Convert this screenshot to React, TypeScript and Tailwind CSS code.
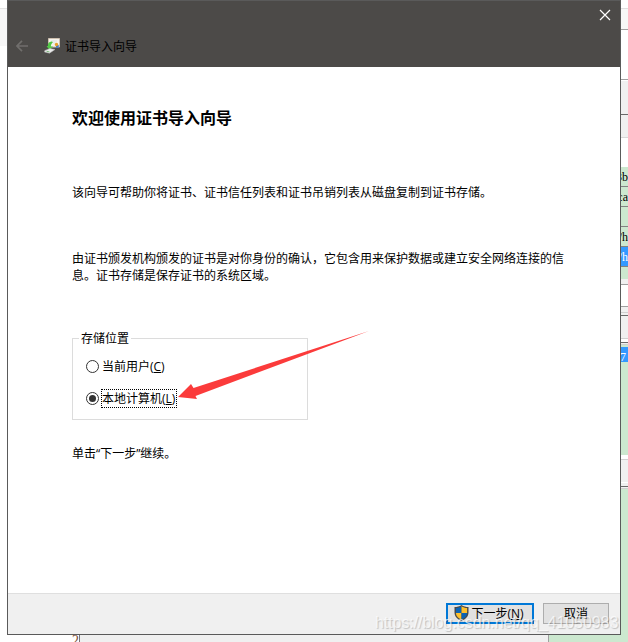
import React from 'react';

type Band = { h: string; label?: string };

const leftBands: Band[] = [
  { h: 'h-2 bg-white' },
  { h: 'h-px bg-[#e4e4e4]' },
  { h: 'h-[37px] bg-[#f7f7f7]' },
  { h: 'h-[589px] bg-white' },
];

const rightBands: Band[] = [
  { h: 'h-2 bg-white' },
  { h: 'h-px bg-[#e0e0e0]' },
  { h: 'h-5 bg-[#f7f7f7]' },
  { h: 'h-px bg-[#a0a0a0]' },
  { h: 'h-[49px] bg-white' },
  { h: 'h-px bg-[#a0a0a0]' },
  { h: 'h-px bg-white' },
  { h: 'h-[33px] bg-[#f0f0f0]' },
  { h: 'h-px bg-[#696969]' },
  { h: 'h-[22px] bg-[#f0f0f0]' },
  { h: 'h-px bg-[#d8d8d8]' },
  { h: 'h-[29px] bg-white' },
  { h: 'h-[19px] bg-[#cce8cf]', label: '3b' },
  { h: 'h-px bg-[#828282]' },
  { h: 'h-[19px] bg-[#cce8cf]', label: 'ca' },
  { h: 'h-px bg-[#828282]' },
  { h: 'h-[19px] bg-[#cce8cf]' },
  { h: 'h-px bg-[#828282]' },
  { h: 'h-[19px] bg-[#cce8cf]', label: '/h' },
  { h: 'h-px bg-[#828282]' },
  { h: 'h-[19px] bg-[#3399ff] text-white', label: '/h' },
  { h: 'h-px bg-[#828282]' },
  { h: 'h-3 bg-[#cce8cf]' },
  { h: 'h-[5px] bg-[#f0f0f0]' },
  { h: 'h-px bg-[#a0a0a0]' },
  { h: 'h-[21px] bg-white' },
  { h: 'h-px bg-[#a0a0a0]' },
  { h: 'h-[5px] bg-[#f0f0f0]' },
  { h: 'h-px bg-[#d0d0d0]' },
  { h: 'h-0.5 bg-[#f0f0f0]' },
  { h: 'h-px bg-[#696969]' },
  { h: 'h-[22px] bg-[#f0f0f0]' },
  { h: 'h-px bg-[#d0d0d0]' },
  { h: 'h-[3px] bg-white' },
  { h: 'h-px bg-[#696969]' },
  { h: 'h-px bg-[#f0f0f0]' },
  { h: 'h-px bg-[#d0d0d0]' },
  { h: 'h-0.5 bg-[#cce8cf]' },
  { h: 'h-[15px] bg-[#3399ff] pt-1 pr-0.5 text-white', label: '7' },
  { h: 'h-[93px] bg-[#cce8cf]' },
  { h: 'h-1 bg-white' },
  { h: 'h-px bg-[#d0d0d0]' },
  { h: 'h-[22px] bg-[#f0f0f0]' },
  { h: 'h-px bg-white' },
  { h: 'h-[3px] bg-[#f0f0f0]' },
  { h: 'h-px bg-[#696969]' },
  { h: 'h-px bg-[#f0f0f0]' },
  { h: 'h-px bg-[#d0d0d0]' },
  { h: 'h-[146px] bg-[#cce8cf]' },
];

function Strip({ bands }: { bands: Band[] }) {
  return (
    <div className="flex w-[7px] shrink-0 flex-col overflow-hidden">
      {bands.map((b, i) => (
        <div
          key={i}
          className={`${b.h} flex shrink-0 items-center justify-end overflow-hidden font-['Liberation_Serif',serif] text-[12px] leading-none`}
        >
          {b.label}
        </div>
      ))}
    </div>
  );
}

function CertificateIcon() {
  return (
    <svg width="17" height="16" viewBox="0 0 17 16">
      <path d="M4.500.5h11v8.500h-11z" fill="#f6f3ec" stroke="#cdbfae" />
      <path d="M7 3h6M9 5h3" stroke="#dde1e6" />
      <path d="M12 7v3l1.500-.5 1.200.8V7" fill="#3f78c8" />
      <circle cx="12.500" cy="6.500" r="1.700" fill="#e5a02c" />
      <path d="M7.500 3.500C4.800 4 3.500 5.500 4 8H2.500l3 4L9 8.500H6.800C6.800 7 7.500 5.500 9 4z" fill="#52c846" />
      <path d="M.8 12.500 6 10.500 11 11.500 5.500 15.200.5 14z" fill="#eaeaea" stroke="#b4b4b4" strokeWidth=".5" />
      <path d="m2.500 13.200 3 .8" stroke="#7ab67a" />
    </svg>
  );
}

function ShieldIcon() {
  return (
    <svg width="15" height="16" viewBox="0 0 15 16">
      <path d="M7.500 0C5.500 1.500 3 2 .5 2v5.200C.5 11.400 3.300 14.300 7.500 16c4.200-1.700 7-4.600 7-8.800V2C12 2 9.500 1.500 7.500 0z" fill="#494949" />
      <path d="M7.500 1.300C5.800 2.500 4 3 1.900 3.100V8h5.600z" fill="#0d63b3" />
      <path d="M7.500 1.300C9.200 2.500 11 3 13.100 3.100V8H7.500z" fill="#ffc02b" />
      <path d="M1.900 8h5.600v6.800C4.300 13.400 2.100 11.200 1.900 8z" fill="#ffc02b" />
      <path d="M13.100 8H7.500v6.800c3.200-1.400 5.400-3.600 5.600-6.800z" fill="#0d63b3" />
    </svg>
  );
}

function Radio({ checked = false }: { checked?: boolean }) {
  return (
    <span className="flex size-[13px] shrink-0 items-center justify-center rounded-full border border-[#333] bg-white">
      {checked && <span className="size-[7px] rounded-full bg-[#333]" />}
    </span>
  );
}

export default function App() {
  return (
    <div className="relative h-[642px] w-[628px] overflow-hidden bg-white font-['Open_Sans','Noto_Sans_CJK_SC',sans-serif] text-[12px] leading-[17px] text-black">
      <div className="flex h-[635px]">
        <Strip bands={leftBands} />
        <main className="flex w-[614px] shrink-0 flex-col border border-[#5a5a5a] bg-white">
          <header className="flex h-[66px] flex-col bg-[#4c4a48]">
            <div className="flex h-7 justify-end pt-2 pr-[9px]">
              <svg width="12" height="12" viewBox="0 0 12 12" stroke="#fff" strokeWidth="1.2">
                <path d="m1 1 10 10M11 1 1 11" />
              </svg>
            </div>
            <div className="flex h-[34px] items-center pl-2">
              <svg width="12" height="12" viewBox="0 0 12 12" fill="none" stroke="#706e6c" strokeWidth="1.7">
                <path d="M12 6H1M6 .8.900 6 6 11.200" />
              </svg>
              <span className="ml-4">
                <CertificateIcon />
              </span>
              <span className="ml-1">证书导入向导</span>
            </div>
          </header>

          <section className="flex h-[526px] flex-col pl-16">
            <h1 className="mt-[39px] text-[16px] leading-6 font-bold">欢迎使用证书导入向导</h1>
            <p className="mt-[54px]">该向导可帮助你将证书、证书信任列表和证书吊销列表从磁盘复制到证书存储。</p>
            <p className="mt-[49px] whitespace-nowrap">
              由证书颁发机构颁发的证书是对你身份的确认，它包含用来保护数据或建立安全网络连接的信
              <br />
              息。证书存储是保存证书的系统区域。
            </p>
            <fieldset className="mt-[46px] flex h-[90px] w-[236px] flex-col border border-[#dcdcdc] pl-[13px]">
              <legend className="-ml-[7px] px-0.5">存储位置</legend>
              <label className="mt-[10px] flex h-[18px] items-center gap-[3px]">
                <Radio />
                <span>
                  当前用户(<u>C</u>)
                </span>
              </label>
              <label className="mt-[14px] flex h-[18px] items-center gap-0.5">
                <Radio checked />
                <span className="flex h-[19px] w-[76px] items-center border border-dotted border-black whitespace-nowrap">
                  本地计算机(<u>L</u>)
                </span>
              </label>
            </fieldset>
            <p className="mt-[25px]">单击“下一步”继续。</p>
          </section>

          <footer className="flex h-[41px] justify-end gap-[9px] border-t border-[#dfdfdf] bg-[#f0f0f0] pt-[9px] pr-[11px]">
            <button className="flex h-[21px] w-[88px] items-center justify-center border-2 border-[#0078d7] bg-[#e1e1e1]">
              <span className="-mt-px -ml-0.5 h-4">
                <ShieldIcon />
              </span>
              <span className="ml-0.5">
                下一步(<u>N</u>)
              </span>
            </button>
            <button className="flex h-[21px] w-[66px] items-center justify-center border border-[#adadad] bg-[#e1e1e1]">
              取消
            </button>
          </footer>
        </main>
        <Strip bands={rightBands} />
      </div>

      <div className="flex h-[7px] overflow-hidden">
        <div className="flex w-20 justify-end overflow-hidden border-r border-[#777] font-['Liberation_Serif',serif] text-[14px] leading-[12px] text-[#7a4b32]">
          2
        </div>
        <div className="w-[468px] bg-[#f0f0f0]" />
        <div className="flex-1 border-l border-[#a0a0a0] bg-[#cce8cf]" />
      </div>

      <svg className="absolute top-[330px] left-[178px]" width="192" height="72" viewBox="0 0 192 72">
        <path d="M0 67 13 54l2.500 4L191 1 17.500 66l1.500 3z" fill="#fb3b3b" />
      </svg>
      <div className="absolute top-[612px] left-[375px] font-['Liberation_Sans',sans-serif] text-[16px] leading-[22px] tracking-[-0.07px] whitespace-nowrap text-white/70 [text-shadow:1px_1px_1px_#0003]">
        https://blog.csdn.net/qq_41050983
      </div>
    </div>
  );
}
